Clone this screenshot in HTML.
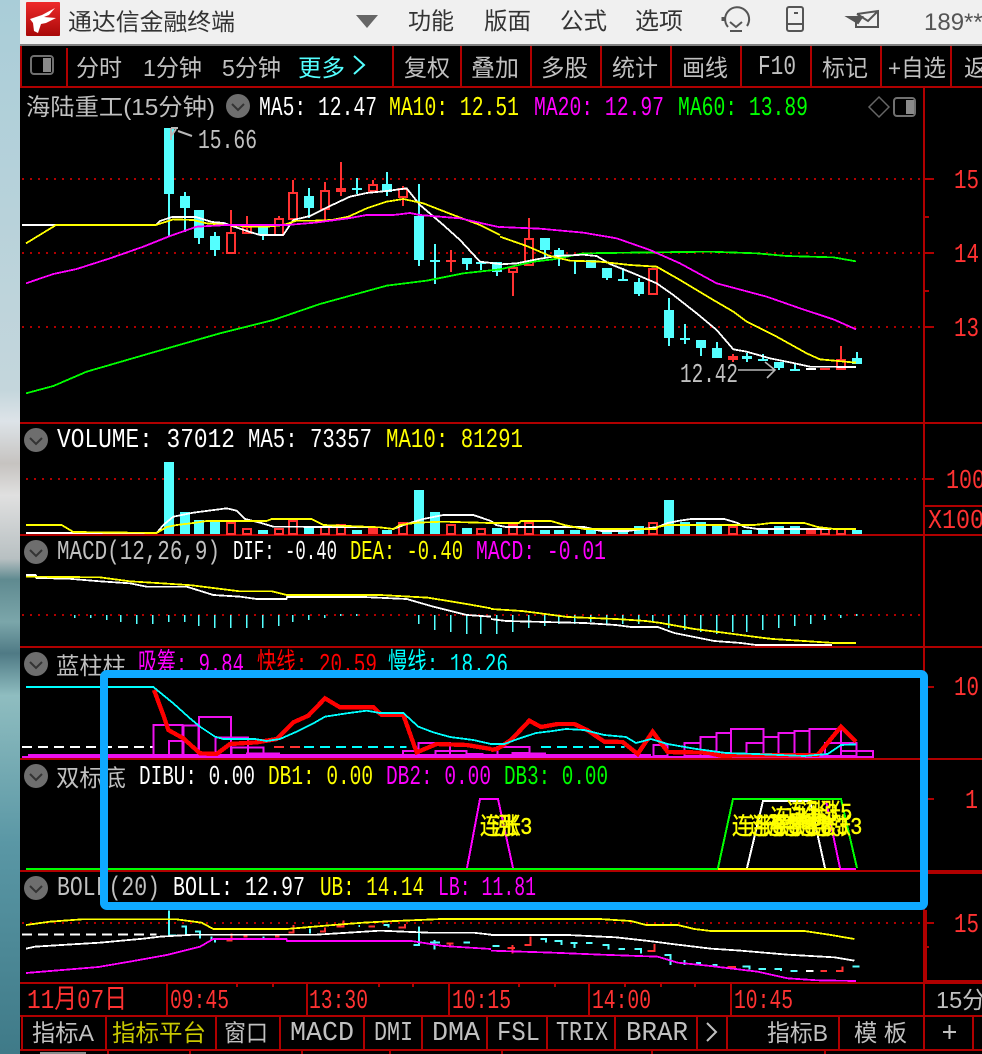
<!DOCTYPE html>
<html><head><meta charset="utf-8"><style>
html,body{margin:0;padding:0;background:#000;width:982px;height:1054px;overflow:hidden}
svg{display:block}
text{white-space:pre}
.m{font:27px "Liberation Mono","WenQuanYi Zen Hei",monospace}
.c{font:23.5px "Liberation Sans","WenQuanYi Zen Hei","Noto Sans CJK SC",sans-serif}
.d{font:23.5px "Liberation Sans","Noto Sans CJK SC",sans-serif}
.l polyline{fill:none;stroke-width:5.4;stroke-linejoin:bevel}
.h rect{fill:none;stroke:#ff3232;stroke-width:6}
.b rect{fill:#54ffff}
.g rect{fill:none;stroke:#ee10ee;stroke-width:6}
</style></head><body>
<svg xmlns="http://www.w3.org/2000/svg" width="982" height="1054" viewBox="0 0 982 1054">
<defs>
<linearGradient id="bg" x1="0" y1="0" x2="0" y2="1">
<stop offset="0" stop-color="#a9cdd8"/><stop offset=".37" stop-color="#c4d6dc"/><stop offset=".40" stop-color="#dde3e8"/><stop offset=".44" stop-color="#c6c3c0"/><stop offset=".47" stop-color="#e0e0e0"/><stop offset=".53" stop-color="#b8c0c2"/><stop offset=".55" stop-color="#5f8a90"/><stop offset=".59" stop-color="#7ba6aa"/><stop offset=".62" stop-color="#4f7a85"/><stop offset=".66" stop-color="#8fbdc0"/><stop offset=".80" stop-color="#5a97a5"/><stop offset="1" stop-color="#3f7a88"/>
</linearGradient>
<linearGradient id="lg" x1="0" y1="0" x2="0" y2="1"><stop offset="0" stop-color="#ee2b2b"/><stop offset="1" stop-color="#a80808"/></linearGradient>
</defs>
<rect width="20" height="1054" fill="url(#bg)"/>
<rect x="20" width="962" height="1054" fill="#000"/>
<rect x="20" width="962" height="44" fill="#f0f0f0"/>
<rect x="20" y="44" width="962" height="2" fill="#808080"/>
<!-- logo -->
<rect x="26" y="2" width="34" height="34" rx="1" fill="url(#lg)"/>
<path d="M30 19L42 15L55 8L49 15L44 17L56 18L46 23L41 24L38 33L34 31L33 23Z" fill="#fff"/>
<text class="d" x="68" y="30" fill="#333" textLength="167" lengthAdjust="spacingAndGlyphs">通达信金融终端</text>
<path d="M356 15H378L367 28Z" fill="#666"/>
<g fill="#333" class="d">
<text x="408" y="29" textLength="46" lengthAdjust="spacingAndGlyphs">功能</text>
<text x="484" y="29" textLength="47" lengthAdjust="spacingAndGlyphs">版面</text>
<text x="560" y="29" textLength="47" lengthAdjust="spacingAndGlyphs">公式</text>
<text x="635" y="29" textLength="48" lengthAdjust="spacingAndGlyphs">选项</text>
</g>
<g fill="none" stroke="#555" stroke-width="2">
<path d="M728 27A12 12 0 1 1 747 26"/><path d="M730 22L736 27L742 22"/><path d="M730 31H742"/><path d="M723 17V21" stroke-width="3"/>
<rect x="787" y="7" width="16" height="24" rx="2"/><path d="M787 24H803M794 13H798"/>
<path d="M857 14L878 11V27H856V22M857 14L868 21L878 11"/><path d="M848 17H862L858 23Z" fill="#555"/>
</g>
<text x="924" y="30" font-family="Liberation Sans,sans-serif" font-size="24" fill="#555">189***</text>

<!-- toolbar -->
<g fill="#b00000">
<rect x="20" y="46" width="2" height="41"/><rect x="20" y="86" width="962" height="2"/>
<rect x="66" y="48" width="2" height="38"/><rect x="392" y="46" width="2" height="40"/><rect x="460" y="46" width="2" height="40"/><rect x="530" y="46" width="2" height="40"/><rect x="600" y="46" width="2" height="40"/><rect x="670" y="46" width="2" height="40"/><rect x="740" y="46" width="2" height="40"/><rect x="810" y="46" width="2" height="40"/><rect x="880" y="46" width="2" height="40"/><rect x="950" y="46" width="2" height="40"/>
</g>
<rect x="31" y="56" width="22" height="18" rx="3" fill="none" stroke="#707070" stroke-width="2"/><rect x="43" y="58" width="8" height="14" fill="#8a8a8a"/>
<g class="d" fill="#c0c0c0">
<text x="76" y="76" textLength="46" lengthAdjust="spacingAndGlyphs">分时</text>
<text x="143" y="76" textLength="59" lengthAdjust="spacingAndGlyphs">1分钟</text>
<text x="222" y="76" textLength="59" lengthAdjust="spacingAndGlyphs">5分钟</text>
<text x="404" y="76" textLength="46" lengthAdjust="spacingAndGlyphs">复权</text>
<text x="471" y="76" textLength="48" lengthAdjust="spacingAndGlyphs">叠加</text>
<text x="541" y="76" textLength="47" lengthAdjust="spacingAndGlyphs">多股</text>
<text x="612" y="76" textLength="46" lengthAdjust="spacingAndGlyphs">统计</text>
<text x="682" y="76" textLength="46" lengthAdjust="spacingAndGlyphs">画线</text>
<text x="758" y="74" textLength="38" lengthAdjust="spacingAndGlyphs" class="m">F10</text>
<text x="822" y="76" textLength="46" lengthAdjust="spacingAndGlyphs">标记</text>
<text x="888" y="76" textLength="58" lengthAdjust="spacingAndGlyphs">+自选</text>
<text x="964" y="76">返</text>
</g>
<text class="d" x="298" y="76" fill="#54ffff" textLength="47" lengthAdjust="spacingAndGlyphs">更多</text>
<path d="M354 56L364 65L354 74" fill="none" stroke="#54ffff" stroke-width="2"/>

<!-- frame lines -->
<g fill="#b00000">
<rect x="923" y="88" width="2" height="895"/>
<rect x="20" y="422" width="962" height="2"/><rect x="20" y="534" width="962" height="2"/><rect x="20" y="646" width="962" height="2"/><rect x="20" y="758" width="962" height="2"/><rect x="20" y="870" width="962" height="2"/><rect x="928" y="871" width="54" height="3"/><rect x="20" y="982" width="962" height="2"/><rect x="20" y="1015" width="962" height="2"/><rect x="20" y="1049" width="962" height="2"/>
<rect x="923" y="505" width="59" height="2"/>
<rect x="925" y="910" width="2" height="71"/><rect x="925" y="980" width="57" height="2"/>
<!-- ticks -->
<rect x="923" y="178" width="11" height="2"/><rect x="923" y="252" width="11" height="2"/><rect x="923" y="326" width="11" height="2"/><rect x="923" y="216" width="6" height="2"/><rect x="923" y="290" width="6" height="2"/>
<rect x="923" y="478" width="11" height="2"/><rect x="923" y="686" width="11" height="2"/><rect x="923" y="798" width="11" height="2"/><rect x="923" y="922" width="11" height="2"/><rect x="923" y="946" width="6" height="2"/>
</g>
<g stroke="#b00000" stroke-width="2" stroke-dasharray="2 6" fill="none" shape-rendering="crispEdges">
<path d="M22 179H923M22 253H923M22 327H923M26 479H923M22 615H921M22 923H923"/>
</g>

<!-- info row -->
<text class="c" x="26" y="115" fill="#c0c0c0" textLength="189" lengthAdjust="spacingAndGlyphs">海陆重工(15分钟)</text>
<g id="ci"><circle cx="238" cy="106" r="12" fill="#6e6e6e"/><path d="M232 104L238 110L244 104" fill="none" stroke="#333" stroke-width="2"/></g>
<g class="m">
<text x="259" y="115" fill="#fff" textLength="118" lengthAdjust="spacingAndGlyphs">MA5: 12.47</text>
<text x="389" y="115" fill="#ff0" textLength="130" lengthAdjust="spacingAndGlyphs">MA10: 12.51</text>
<text x="534" y="115" fill="#f0f" textLength="130" lengthAdjust="spacingAndGlyphs">MA20: 12.97</text>
<text x="678" y="115" fill="#0f0" textLength="130" lengthAdjust="spacingAndGlyphs">MA60: 13.89</text>
</g>
<path d="M879 97L889 107L879 117L869 107Z" fill="none" stroke="#666" stroke-width="1.5"/>
<rect x="894" y="98" width="21" height="18" rx="3" fill="none" stroke="#707070" stroke-width="2"/><rect x="906" y="100" width="8" height="14" fill="#8a8a8a"/>
<g class="m" fill="#ff3232">
<text x="954" y="188" textLength="25" lengthAdjust="spacingAndGlyphs">15</text>
<text x="954" y="262" textLength="25" lengthAdjust="spacingAndGlyphs">14</text>
<text x="954" y="336" textLength="25" lengthAdjust="spacingAndGlyphs">13</text>
<text x="946" y="488" textLength="39" lengthAdjust="spacingAndGlyphs">100</text>
<text x="928" y="528" textLength="56" lengthAdjust="spacingAndGlyphs">X100</text>
<text x="954" y="695" textLength="25" lengthAdjust="spacingAndGlyphs">10</text>
<text x="965" y="808" textLength="13" lengthAdjust="spacingAndGlyphs">1</text>
<text x="954" y="932" textLength="25" lengthAdjust="spacingAndGlyphs">15</text>
</g>
<text class="m" x="198" y="148" fill="#c0c0c0" textLength="59" lengthAdjust="spacingAndGlyphs">15.66</text>
<text class="m" x="680" y="382" fill="#c0c0c0" textLength="58" lengthAdjust="spacingAndGlyphs">12.42</text>

<!-- candles -->
<g shape-rendering="crispEdges">
<path fill="#54ffff" d="M164 128h10v66h-10zM168 194h2v43h-2zM180 196h10v12h-10zM184 192h2v40h-2zM194 210h10v28h-10zM198 238h2v6h-2zM210 236h10v14h-10zM214 232h2v24h-2zM258 226h10v8h-10zM262 234h2v6h-2zM304 196h10v12h-10zM308 188h2v30h-2zM352 188h10v2h-10zM356 178h2v16h-2zM382 184h10v8h-10zM386 172h2v24h-2zM414 216h10v44h-10zM418 184h2v82h-2zM430 260h10v2h-10zM434 244h2v40h-2zM462 258h10v6h-10zM466 264h2v6h-2zM476 262h10v2h-10zM480 262h2v8h-2zM492 262h10v10h-10zM496 272h2v4h-2zM540 238h10v12h-10zM544 250h2v8h-2zM554 250h10v8h-10zM558 248h2v18h-2zM574 260h2v14h-2zM586 260h10v8h-10zM602 268h10v10h-10zM606 278h2v2h-2zM618 279h10v2h-10zM622 268h2v12h-2zM634 282h10v12h-10zM638 278h2v18h-2zM664 310h10v28h-10zM668 298h2v48h-2zM680 338h10v2h-10zM684 324h2v20h-2zM696 340h10v8h-10zM700 348h2v8h-2zM712 348h10v10h-10zM716 342h2v6h-2zM742 356h10v3h-10zM746 353h2v9h-2zM758 359h10v2h-10zM762 354h2v6h-2zM774 362h10v6h-10zM778 368h2v2h-2zM790 369h10v2h-10zM794 363h2v7h-2zM852 358h10v6h-10zM856 352h2v6h-2z"/>
<path fill="#ff3232" d="M230 210h2v22h-2zM246 216h2v18h-2zM278 216h2v2h-2zM292 180h2v12h-2zM324 182h2v8h-2zM324 210h2v10h-2zM336 188h10v4h-10zM340 162h2v34h-2zM372 180h2v4h-2zM402 186h2v2h-2zM402 198h2v8h-2zM446 260h10v2h-10zM450 250h2v22h-2zM512 272h2v24h-2zM528 218h2v20h-2zM728 356h10v4h-10zM732 354h2v8h-2zM820 368h10v2h-10zM840 346h2v14h-2z"/>
<g fill="none" stroke="#ff3232" stroke-width="2">
<rect x="227" y="233" width="8" height="20"/><rect x="243" y="227" width="8" height="6"/><rect x="275" y="219" width="8" height="16"/><rect x="289" y="193" width="8" height="26"/><rect x="321" y="191" width="8" height="18"/><rect x="369" y="185" width="8" height="6"/><rect x="399" y="189" width="8" height="8"/><rect x="509" y="268" width="8" height="4"/><rect x="525" y="239" width="8" height="26"/><rect x="649" y="269" width="8" height="25"/><rect x="837" y="360" width="8" height="9"/>
</g>
<rect x="806" y="368" width="10" height="2" fill="#fff"/>
</g>
<!-- MA lines -->
<g class="l" shape-rendering="crispEdges">
<g transform="translate(20,120) scale(.33333)">
<polyline stroke="#0f0" points="18,820 100,798 200,755 400,697 600,640 760,600 900,552 1100,497 1220,482 1330,460 1440,448"/>
<polyline stroke="#fff" points="6,315 408,315 420,303 456,291 528,291 576,306 612,309 645,321 690,336 720,345 790,345 820,300 870,288 930,258 990,230 1040,219 1100,213 1160,205 1200,255 1270,315 1320,360 1380,425 1440,432"/>
<polyline stroke="#ff0" points="18,370 100,320 108,315 408,315 460,298 520,300 560,310 620,315 700,320 740,320 790,315 830,302 885,302 935,300 985,290 1040,265 1100,245 1150,237 1210,250 1300,285 1380,315 1440,345"/>
<polyline stroke="#f0f" points="18,490 100,462 170,447 270,415 370,380 450,348 530,320 620,315 800,315 885,308 985,295 1040,285 1120,285 1170,279 1200,285 1320,295 1440,322"/>
</g>
<g transform="translate(500,120) scale(.33333)">
<polyline stroke="#0f0" points="0,448 100,425 160,418 250,400 390,398 630,395 770,400 860,408 1000,412 1068,424"/>
<polyline stroke="#fff" points="0,433 50,430 110,418 170,408 250,404 290,408 330,432 400,460 470,490 520,525 590,580 650,630 700,688 740,695 810,715 870,727 930,740 1068,741"/>
<polyline stroke="#ff0" points="0,350 80,378 150,408 210,422 300,425 390,435 470,440 540,480 640,540 700,575 740,605 830,650 920,700 960,718 1068,728"/>
<polyline stroke="#f0f" points="0,321 120,326 250,338 350,355 450,390 540,430 650,490 800,530 900,565 1000,598 1068,628"/>
</g>
</g>
<g fill="none" stroke="#b8b8b8" stroke-width="2">
<path d="M171 136L176 129M171 128H178M171 128V140M178 131L192 136"/>
<path d="M738 370H774M765 362L775 370L767 378" stroke-width="1.6"/>
</g>

<!-- VOLUME panel -->
<use href="#ci" x="-202" y="334"/>
<g class="m">
<text x="57" y="447" fill="#fff" textLength="178" lengthAdjust="spacingAndGlyphs">VOLUME: 37012</text>
<text x="248" y="447" fill="#fff" textLength="124" lengthAdjust="spacingAndGlyphs">MA5: 73357</text>
<text x="386" y="447" fill="#ff0" textLength="137" lengthAdjust="spacingAndGlyphs">MA10: 81291</text>
</g>
<g shape-rendering="crispEdges">
<g transform="translate(0,420) scale(.33333)">
<g class="b"><rect x="492" y="126" width="30" height="216"/><rect x="540" y="276" width="30" height="66"/><rect x="582" y="300" width="30" height="42"/><rect x="630" y="306" width="30" height="36"/><rect x="774" y="330" width="30" height="12"/><rect x="912" y="318" width="30" height="24"/><rect x="1056" y="330" width="30" height="12"/><rect x="1146" y="330" width="30" height="12"/><rect x="1242" y="210" width="30" height="132"/><rect x="1290" y="276" width="30" height="66"/><rect x="1386" y="324" width="30" height="18"/></g>
<g class="h"><rect x="681" y="309" width="24" height="33"/><rect x="729" y="327" width="24" height="15"/><rect x="825" y="327" width="24" height="15"/><rect x="867" y="303" width="24" height="39"/><rect x="963" y="321" width="24" height="21"/><rect x="1011" y="315" width="24" height="27"/><rect x="1197" y="309" width="24" height="33"/><rect x="1341" y="315" width="24" height="27"/><rect x="1431" y="327" width="24" height="15"/></g>
<rect x="1104" y="324" width="30" height="18" fill="#ff3232"/>
<g class="l"><polyline stroke="#fff" points="78,339 470,339 490,315 520,290 580,278 680,265 710,272 735,297 780,308 820,320 1140,322 1180,327 1220,312 1270,297 1330,285 1420,285 1473,303"/>
<polyline stroke="#ff0" points="78,315 185,315 220,336 470,339 500,321 530,315 580,309 620,303 800,303 815,297 935,297 970,315 1140,322 1180,327 1200,315 1250,308 1330,305 1473,309"/></g>
</g>
<g transform="translate(491,420) scale(.33333)">
<g class="b"><rect x="3" y="324" width="30" height="18"/><rect x="147" y="330" width="30" height="12"/><rect x="189" y="330" width="30" height="12"/><rect x="237" y="330" width="30" height="12"/><rect x="285" y="330" width="30" height="12"/><rect x="333" y="333" width="30" height="9"/><rect x="381" y="333" width="30" height="9"/><rect x="429" y="318" width="30" height="24"/><rect x="519" y="240" width="30" height="102"/><rect x="567" y="306" width="30" height="36"/><rect x="615" y="306" width="30" height="36"/><rect x="663" y="318" width="30" height="24"/><rect x="753" y="330" width="30" height="12"/><rect x="801" y="330" width="30" height="12"/><rect x="849" y="318" width="30" height="24"/><rect x="897" y="318" width="30" height="24"/><rect x="1083" y="330" width="30" height="12"/></g>
<g class="h"><rect x="54" y="315" width="24" height="27"/><rect x="102" y="309" width="24" height="33"/><rect x="474" y="309" width="24" height="33"/><rect x="714" y="321" width="24" height="21"/><rect x="990" y="327" width="24" height="15"/><rect x="1038" y="327" width="24" height="15"/></g>
<rect x="945" y="330" width="30" height="12" fill="#ff3232"/>
<g class="l"><polyline stroke="#fff" points="0,303 15,315 45,321 280,321 330,333 410,333 500,321 530,309 560,303 600,297 700,297 740,309 760,321 800,327 1020,327"/>
<polyline stroke="#ff0" points="0,309 85,309 90,303 180,303 220,315 280,327 495,327 500,321 530,315 790,315 840,309 940,309 980,321 1030,327 1095,327"/></g>
</g>
</g>

<!-- MACD panel -->
<use href="#ci" x="-202" y="446"/>
<g class="m">
<text x="57" y="559" fill="#c0c0c0" textLength="163" lengthAdjust="spacingAndGlyphs">MACD(12,26,9)</text>
<text x="233" y="559" fill="#fff" textLength="104" lengthAdjust="spacingAndGlyphs">DIF: -0.40</text>
<text x="350" y="559" fill="#ff0" textLength="113" lengthAdjust="spacingAndGlyphs">DEA: -0.40</text>
<text x="476" y="559" fill="#f0f" textLength="130" lengthAdjust="spacingAndGlyphs">MACD: -0.01</text>
</g>
<g shape-rendering="crispEdges">
<g transform="translate(0,420) scale(.33333)">
<path fill="none" stroke="#54ffff" stroke-width="5" d="M224 585V594M272 585V594M320 585V600M362 585V606M410 585V612M458 585V612M506 585V606M554 585V606M596 585V618M644 585V624M692 585V624M740 585V624M788 585V624M836 585V618M878 585V606M926 585V600M974 585V594M1022 582V588M1070 582V588M1256 585V612M1304 585V630M1352 585V636M1400 585V642M1442 585V642"/>
<g class="l"><polyline stroke="#fff" points="78,465 108,465 108,474 205,476 300,484 390,490 440,500 560,500 640,525 720,530 770,537 860,537 860,531 1090,531 1220,537 1300,560 1400,585 1473,590"/>
<polyline stroke="#ff0" points="78,470 300,472 390,484 486,490 576,496 672,508 720,514 816,514 860,525 1140,525 1284,533 1400,552 1473,565"/></g>
</g>
<g transform="translate(491,420) scale(.33333)">
<path fill="none" stroke="#54ffff" stroke-width="5" d="M17 585V642M65 585V636M113 585V624M161 585V618M203 585V612M251 585V612M299 585V606M347 585V612M395 585V612M443 585V612M485 585V606M533 585V624M581 585V630M629 585V636M677 585V642M725 585V636M767 585V636M815 585V630M863 585V624M911 585V618M959 585V612M1001 585V600M1049 585V594M1097 582V588"/>
<g class="l"><polyline stroke="#fff" points="0,597 45,603 280,609 375,615 420,621 500,621 550,639 610,651 670,663 750,669 795,675 1023,675"/>
<polyline stroke="#ff0" points="0,567 93,573 140,579 230,591 375,597 465,603 510,609 610,627 705,639 795,651 845,657 940,663 1030,669 1095,669"/></g>
</g>
</g>

<!-- 蓝柱柱 -->
<use href="#ci" x="-202" y="558"/>
<text class="d" x="56" y="674" fill="#c0c0c0" textLength="70" lengthAdjust="spacingAndGlyphs">蓝柱柱</text>
<text class="m" x="138" y="672" fill="#f0f" textLength="106" lengthAdjust="spacingAndGlyphs">吸筹: 9.84</text>
<text class="m" x="257" y="672" fill="#f00" textLength="120" lengthAdjust="spacingAndGlyphs">快线: 20.59</text>
<text class="m" x="388" y="672" fill="#0ff" textLength="120" lengthAdjust="spacingAndGlyphs">慢线: 18.26</text>
<g shape-rendering="crispEdges">
<g transform="translate(0,645) scale(.33333)">
<path stroke="#fff" stroke-width="6" stroke-dasharray="30 18" d="M66 306H460"/>
<path stroke="#ff3232" stroke-width="6" stroke-dasharray="30 18" d="M822 306H900"/>
<path stroke="#0ff" stroke-width="6" stroke-dasharray="30 18" d="M912 306H1220"/>
<rect x="66" y="333" width="1407" height="6" fill="#ee10ee"/><rect x="84" y="327" width="1389" height="6" fill="#ee10ee"/>
<g class="g"><rect x="460" y="240" width="88" height="93"/><rect x="507" y="288" width="43" height="45"/><rect x="550" y="241" width="46" height="92"/><rect x="597" y="216" width="96" height="117"/><rect x="646" y="278" width="98" height="55"/><rect x="694" y="307" width="96" height="26"/><rect x="741" y="325" width="49" height="8"/><rect x="1209" y="318" width="46" height="15"/><rect x="1255" y="294" width="95" height="39"/><rect x="1306" y="318" width="44" height="15"/><rect x="1350" y="318" width="50" height="15"/></g>
<rect x="790" y="322" width="50" height="11" fill="#ee10ee"/><rect x="1400" y="324" width="50" height="9" fill="#ee10ee"/>
<polyline fill="none" stroke="#f00" stroke-width="13" points="462,135 490,210 505,255 550,280 600,325 650,327 690,297 770,292 830,282 880,232 925,212 975,160 1020,187 1120,187 1145,210 1210,210 1250,322 1310,297 1400,300 1473,312"/>
<polyline fill="none" stroke="#0ff" stroke-width="5.4" points="78,126 460,126 520,175 570,220 600,245 645,275 670,282 765,282 800,288 840,282 890,260 940,235 975,215 1040,205 1100,197 1140,204 1210,204 1255,245 1300,262 1350,276 1420,285 1473,297"/>
</g>
<g transform="translate(491,645) scale(.33333)">
<path stroke="#0ff" stroke-width="6" stroke-dasharray="30 18" d="M150 306H400"/>
<rect x="0" y="333" width="1146" height="6" fill="#ee10ee"/><rect x="0" y="327" width="480" height="6" fill="#ee10ee"/>
<g class="g"><rect x="20" y="306" width="95" height="27"/><rect x="65" y="324" width="50" height="9"/><rect x="487" y="300" width="43" height="33"/><rect x="580" y="294" width="48" height="39"/><rect x="628" y="276" width="48" height="57"/><rect x="677" y="264" width="43" height="69"/><rect x="720" y="252" width="97" height="81"/><rect x="767" y="294" width="50" height="39"/><rect x="817" y="276" width="45" height="57"/><rect x="862" y="264" width="48" height="69"/><rect x="910" y="258" width="45" height="75"/><rect x="955" y="252" width="95" height="81"/><rect x="1002" y="294" width="95" height="39"/><rect x="1050" y="318" width="96" height="18"/></g>
<rect x="115" y="322" width="50" height="11" fill="#ee10ee"/>
<polyline fill="none" stroke="#f00" stroke-width="13" points="0,315 20,311 60,285 115,227 150,246 200,237 250,237 290,256 340,290 395,291 440,327 485,260 530,321 650,323 690,332 980,330 1050,245 1095,290"/>
<polyline fill="none" stroke="#0ff" stroke-width="5.4" points="0,297 40,297 80,282 135,264 185,258 225,252 280,255 340,270 405,276 435,294 480,282 530,297 610,311 705,324 795,327 940,333 1010,327 1050,300 1095,298"/>
</g>
</g>

<!-- 双标底 -->
<use href="#ci" x="-202" y="670"/>
<text class="d" x="56" y="786" fill="#c0c0c0" textLength="70" lengthAdjust="spacingAndGlyphs">双标底</text>
<g class="m">
<text x="139" y="784" fill="#fff" textLength="116" lengthAdjust="spacingAndGlyphs">DIBU: 0.00</text>
<text x="268" y="784" fill="#ff0" textLength="105" lengthAdjust="spacingAndGlyphs">DB1: 0.00</text>
<text x="386" y="784" fill="#f0f" textLength="105" lengthAdjust="spacingAndGlyphs">DB2: 0.00</text>
<text x="504" y="784" fill="#0f0" textLength="104" lengthAdjust="spacingAndGlyphs">DB3: 0.00</text>
</g>
<g shape-rendering="crispEdges" fill="none" stroke-width="2">
<path stroke="#0f0" d="M26 869H718"/><path stroke="#ff0" d="M718 869H840"/><path stroke="#f0f" d="M840 869H856"/>
<path stroke="#f0f" d="M467 868L480 799H498L513 868"/>
<path stroke="#fff" d="M747 868L763 801H810L825 868"/>
<path stroke="#f0f" d="M826 801L840 868"/>
<path stroke="#0f0" d="M718 868L733 799H841L857 868"/>
</g>
<g class="d" fill="#ff0" stroke="#ff0" stroke-width=".4">
<text x="480" y="834" textLength="52" lengthAdjust="spacingAndGlyphs">连涨3</text>
<text x="493" y="834" textLength="26" lengthAdjust="spacingAndGlyphs">涨</text>
<text x="732" y="834" textLength="52" lengthAdjust="spacingAndGlyphs">连涨3</text>
<text x="748" y="834" textLength="52" lengthAdjust="spacingAndGlyphs">连涨3</text>
<text x="764" y="834" textLength="52" lengthAdjust="spacingAndGlyphs">连涨3</text>
<text x="780" y="834" textLength="52" lengthAdjust="spacingAndGlyphs">连涨3</text>
<text x="796" y="834" textLength="52" lengthAdjust="spacingAndGlyphs">连涨3</text>
<text x="810" y="834" textLength="52" lengthAdjust="spacingAndGlyphs">连涨3</text>
<text x="770" y="826" textLength="52" lengthAdjust="spacingAndGlyphs">连涨3</text>
<text x="786" y="820" textLength="52" lengthAdjust="spacingAndGlyphs">连涨3</text>
<text x="800" y="820" textLength="52" lengthAdjust="spacingAndGlyphs">连涨5</text>
</g>

<!-- BOLL -->
<use href="#ci" x="-202" y="782"/>
<g class="m">
<text x="57" y="895" fill="#c0c0c0" textLength="103" lengthAdjust="spacingAndGlyphs">BOLL(20)</text>
<text x="173" y="895" fill="#fff" textLength="132" lengthAdjust="spacingAndGlyphs">BOLL: 12.97</text>
<text x="320" y="895" fill="#ff0" textLength="104" lengthAdjust="spacingAndGlyphs">UB: 14.14</text>
<text x="438" y="895" fill="#f0f" textLength="98" lengthAdjust="spacingAndGlyphs">LB: 11.81</text>
</g>
<g shape-rendering="crispEdges">
<g transform="translate(0,870) scale(.33333)">
<path fill="none" stroke="#54ffff" stroke-width="6" d="M507 122V196H530M545 170H558V194M585 185H600V205M635 200V210M645 205V218M790 200V205M930 175V190M1075 168H1080M1150 165H1165V172M1257 170V225H1240M1290 218H1320M1304 210V238M1390 218H1410"/>
<path fill="none" stroke="#ff3232" stroke-width="6" d="M680 212H695V190M730 200H742M825 200H838M865 188H880V165M960 185H975V172M1010 170H1030V152M1105 170H1125M1195 172H1215V162M1340 220H1360M1350 220V232"/>
<path stroke="#fff" stroke-width="6" stroke-dasharray="30 18" d="M66 194H470"/>
<g class="l"><polyline stroke="#ff0" points="78,165 150,155 245,148 530,148 605,158 640,177 860,177 1000,165 1090,158 1185,153 1325,147 1473,147"/>
<polyline stroke="#fff" points="78,236 105,230 200,224 300,218 430,206 480,200 580,194 950,194 1140,182 1285,188 1420,188 1473,194"/>
<polyline stroke="#f0f" points="78,309 150,303 295,291 400,273 500,255 600,230 640,207 860,207 860,213 1235,213 1330,228 1473,237"/></g>
</g>
<g transform="translate(491,870) scale(.33333)">
<path fill="none" stroke="#54ffff" stroke-width="6" d="M5 228H25M148 207H165V218M190 213H212V225M238 219H260M250 219V234M285 219H305M335 225H352V238M382 237H402M430 237H450V250M520 255H538V285M580 270V285M615 279H630M665 285H680M755 290H775V298M802 297H825M850 297H870V303M898 303H920M1085 290H1105"/>
<path fill="none" stroke="#ff3232" stroke-width="6" d="M50 234H72M65 225V250M100 225H118V200M470 243H490V222M710 291H735M988 303H1008M1035 303H1055V290"/>
<path stroke="#fff" stroke-width="6" d="M945 303H968"/>
<g class="l"><polyline stroke="#ff0" points="0,147 325,147 420,153 465,165 560,165 610,177 660,183 940,183 1020,195 1090,207"/>
<polyline stroke="#fff" points="0,195 230,195 375,202 465,212 560,224 660,236 750,242 890,254 1030,262 1090,272"/>
<polyline stroke="#f0f" points="0,242 185,248 330,254 500,260 560,278 650,287 800,305 890,325 980,331 1095,333"/></g>
</g>
</g>

<!-- Time row -->
<g fill="#b00000">
<rect x="166" y="984" width="2" height="31"/><rect x="306" y="984" width="2" height="31"/><rect x="448" y="984" width="2" height="31"/><rect x="588" y="984" width="2" height="31"/><rect x="730" y="984" width="2" height="31"/><rect x="923" y="984" width="2" height="31"/>
<rect x="236" y="984" width="2" height="3"/><rect x="272" y="984" width="2" height="3"/><rect x="378" y="984" width="2" height="3"/><rect x="412" y="984" width="2" height="3"/><rect x="518" y="984" width="2" height="3"/><rect x="554" y="984" width="2" height="3"/><rect x="624" y="984" width="2" height="3"/><rect x="660" y="984" width="2" height="3"/><rect x="694" y="984" width="2" height="3"/>
<!-- bottom separators -->
<rect x="21" y="1015" width="2" height="34"/><rect x="105" y="1015" width="2" height="34"/><rect x="215" y="1015" width="2" height="34"/><rect x="279" y="1015" width="2" height="34"/><rect x="363" y="1015" width="2" height="34"/><rect x="421" y="1015" width="2" height="34"/><rect x="486" y="1015" width="2" height="34"/><rect x="546" y="1015" width="2" height="34"/><rect x="614" y="1015" width="2" height="34"/><rect x="696" y="1015" width="2" height="34"/><rect x="726" y="1015" width="2" height="34"/><rect x="838" y="1015" width="2" height="34"/><rect x="923" y="1015" width="2" height="34"/><rect x="972" y="1015" width="2" height="34"/>
<rect x="107" y="1051" width="2" height="3"/><rect x="189" y="1051" width="2" height="3"/><rect x="301" y="1051" width="2" height="3"/><rect x="389" y="1051" width="2" height="3"/><rect x="501" y="1051" width="2" height="3"/><rect x="651" y="1051" width="2" height="3"/><rect x="824" y="1051" width="2" height="3"/>
</g>
<rect x="40" y="1052" width="46" height="2" fill="#8a8a8a"/>
<g class="m" fill="#ff3232">
<text x="27" y="1008" textLength="100" lengthAdjust="spacingAndGlyphs">11月07日</text>
<text x="170" y="1008" textLength="59" lengthAdjust="spacingAndGlyphs">09:45</text>
<text x="309" y="1008" textLength="59" lengthAdjust="spacingAndGlyphs">13:30</text>
<text x="452" y="1008" textLength="59" lengthAdjust="spacingAndGlyphs">10:15</text>
<text x="592" y="1008" textLength="59" lengthAdjust="spacingAndGlyphs">14:00</text>
<text x="734" y="1008" textLength="59" lengthAdjust="spacingAndGlyphs">10:45</text>
</g>
<text class="d" x="936" y="1008" fill="#c0c0c0">15分</text>
<g fill="#c0c0c0">
<text class="d" x="32" y="1041" textLength="62" lengthAdjust="spacingAndGlyphs">指标A</text>
<text class="d" x="112" y="1041" fill="#c8c800" textLength="94" lengthAdjust="spacingAndGlyphs">指标平台</text>
<text class="d" x="224" y="1041" textLength="44" lengthAdjust="spacingAndGlyphs">窗口</text>
<text class="m" x="290" y="1040" textLength="64" lengthAdjust="spacingAndGlyphs">MACD</text>
<text class="m" x="374" y="1040" textLength="39" lengthAdjust="spacingAndGlyphs">DMI</text>
<text class="m" x="432" y="1040" textLength="48" lengthAdjust="spacingAndGlyphs">DMA</text>
<text class="m" x="497" y="1040" textLength="43" lengthAdjust="spacingAndGlyphs">FSL</text>
<text class="m" x="556" y="1040" textLength="52" lengthAdjust="spacingAndGlyphs">TRIX</text>
<text class="m" x="626" y="1040" textLength="62" lengthAdjust="spacingAndGlyphs">BRAR</text>
<text class="d" x="767" y="1041" textLength="61" lengthAdjust="spacingAndGlyphs">指标B</text>
<text class="d" x="854" y="1041" textLength="53" lengthAdjust="spacingAndGlyphs">模 板</text>
</g>
<path d="M707 1023L716 1032L707 1041" fill="none" stroke="#c0c0c0" stroke-width="2"/>
<path d="M943 1032H956M949.500 1025V1039" fill="none" stroke="#c0c0c0" stroke-width="2"/>

<!-- blue highlight -->
<rect x="104" y="674" width="820" height="232" rx="3" fill="none" stroke="#0fa9ff" stroke-width="8"/>
</svg>
</body></html>
